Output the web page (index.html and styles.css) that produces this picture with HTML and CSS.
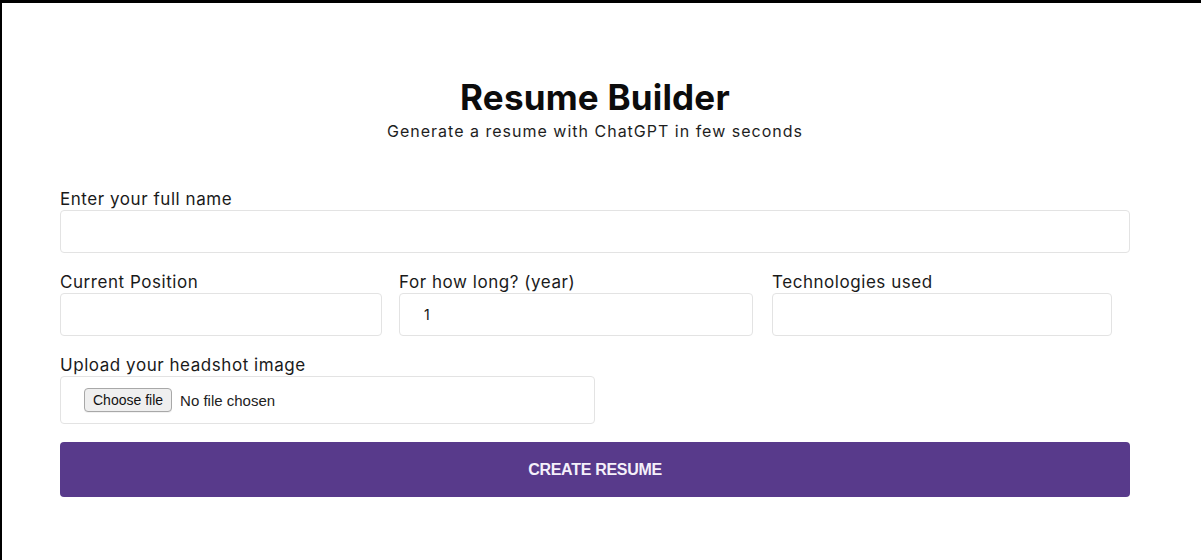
FILE: index.html
```html
<!DOCTYPE html>
<html lang="en">
<head>
<meta charset="utf-8">
<title>Resume Builder</title>
<link rel="stylesheet" href="styles.css">
</head>
<body>
<div class="frame">
  <main class="app">
    <header class="hero">
      <h1 class="title">Resume Builder</h1>
      <p class="subtitle">Generate a resume with ChatGPT in few seconds</p>
    </header>
    <form class="form">
      <div class="field">
        <label class="label" for="fullName">Enter your full name</label>
        <input class="input" id="fullName" type="text">
      </div>
      <div class="row">
        <div class="field">
          <label class="label" for="position">Current Position</label>
          <input class="input" id="position" type="text">
        </div>
        <div class="field">
          <label class="label" for="length">For how long? (year)</label>
          <input class="input input-number" id="length" type="number" value="1">
        </div>
        <div class="field field-third">
          <label class="label" for="tech">Technologies used</label>
          <input class="input" id="tech" type="text">
        </div>
      </div>
      <div class="field field-file">
        <span class="label">Upload your headshot image</span>
        <div class="filebox">
          <input class="file" id="photo" type="file" accept="image/*">
          <label class="file-btn" for="photo">Choose file</label>
          <span class="file-name">No file chosen</span>
        </div>
      </div>
      <button class="submit" type="button">CREATE RESUME</button>
    </form>
  </main>
</div>
</body>
</html>
```
FILE: styles.css
```css
* { box-sizing: border-box; }

html, body {
  margin: 0;
  padding: 0;
  background: #ffffff;
}

.frame {
  width: 1201px;
  height: 560px;
  border-top: 3px solid #000;
  border-left: 2px solid #000;
  overflow: hidden;
  font-family: "Inter", "DejaVu Sans", sans-serif;
  color: #111;
}

.app {
  width: 1070px;
  margin-left: 58px;
  padding-top: 74px;
}

.hero {
  text-align: center;
  margin-bottom: 48px;
}

.title {
  margin: 0;
  font-size: 35px;
  line-height: 40px;
  font-weight: 700;
  letter-spacing: 0.2px;
  color: #0c0c0c;
}

.subtitle {
  margin: 4px 0 0;
  font-size: 16px;
  line-height: 20px;
  letter-spacing: 1px;
  color: #1e1e1e;
}

.form {
  display: flex;
  flex-direction: column;
  gap: 19px;
}

.field {
  display: flex;
  flex-direction: column;
  gap: 1px;
}

.label {
  font-size: 17px;
  line-height: 20px;
  letter-spacing: 0.55px;
  color: #1a1a1a;
}

.input {
  height: 43px;
  width: 100%;
  border: 1px solid #e3e3e3;
  border-radius: 4px;
  padding: 0 24px;
  font-family: inherit;
  font-size: 14px;
  color: #111;
  background: #fff;
  outline: none;
}

.input-number::-webkit-inner-spin-button,
.input-number::-webkit-outer-spin-button {
  -webkit-appearance: none;
  margin: 0;
}

.row {
  display: grid;
  grid-template-columns: 322px 354px 342px;
  column-gap: 17px;
}

.field-third { padding-left: 2px; }

.field-file { width: 535px; }

.filebox {
  height: 48px;
  border: 1px solid #e3e3e3;
  border-radius: 4px;
  padding: 0 23px;
  display: flex;
  align-items: center;
  gap: 8px;
}

.file {
  position: absolute;
  width: 1px;
  height: 1px;
  opacity: 0;
  overflow: hidden;
}

.file-btn {
  font-family: "Liberation Sans", Arial, sans-serif;
  font-size: 14px;
  line-height: 22px;
  color: #111;
  background: #efefef;
  border: 1px solid #a8a8a8;
  border-radius: 4px;
  padding: 0 8px;
  box-shadow: 0 1px 0 rgba(0, 0, 0, 0.05);
}

.file-name {
  font-family: "Liberation Sans", Arial, sans-serif;
  font-size: 15px;
  color: #222;
}

.submit {
  margin-top: -1px;
  height: 55px;
  width: 100%;
  border: none;
  border-radius: 4px;
  background: #583a8b;
  color: #f4f0fa;
  font-family: "Liberation Sans", Arial, sans-serif;
  font-weight: 700;
  font-size: 16px;
  letter-spacing: -0.3px;
}
```
